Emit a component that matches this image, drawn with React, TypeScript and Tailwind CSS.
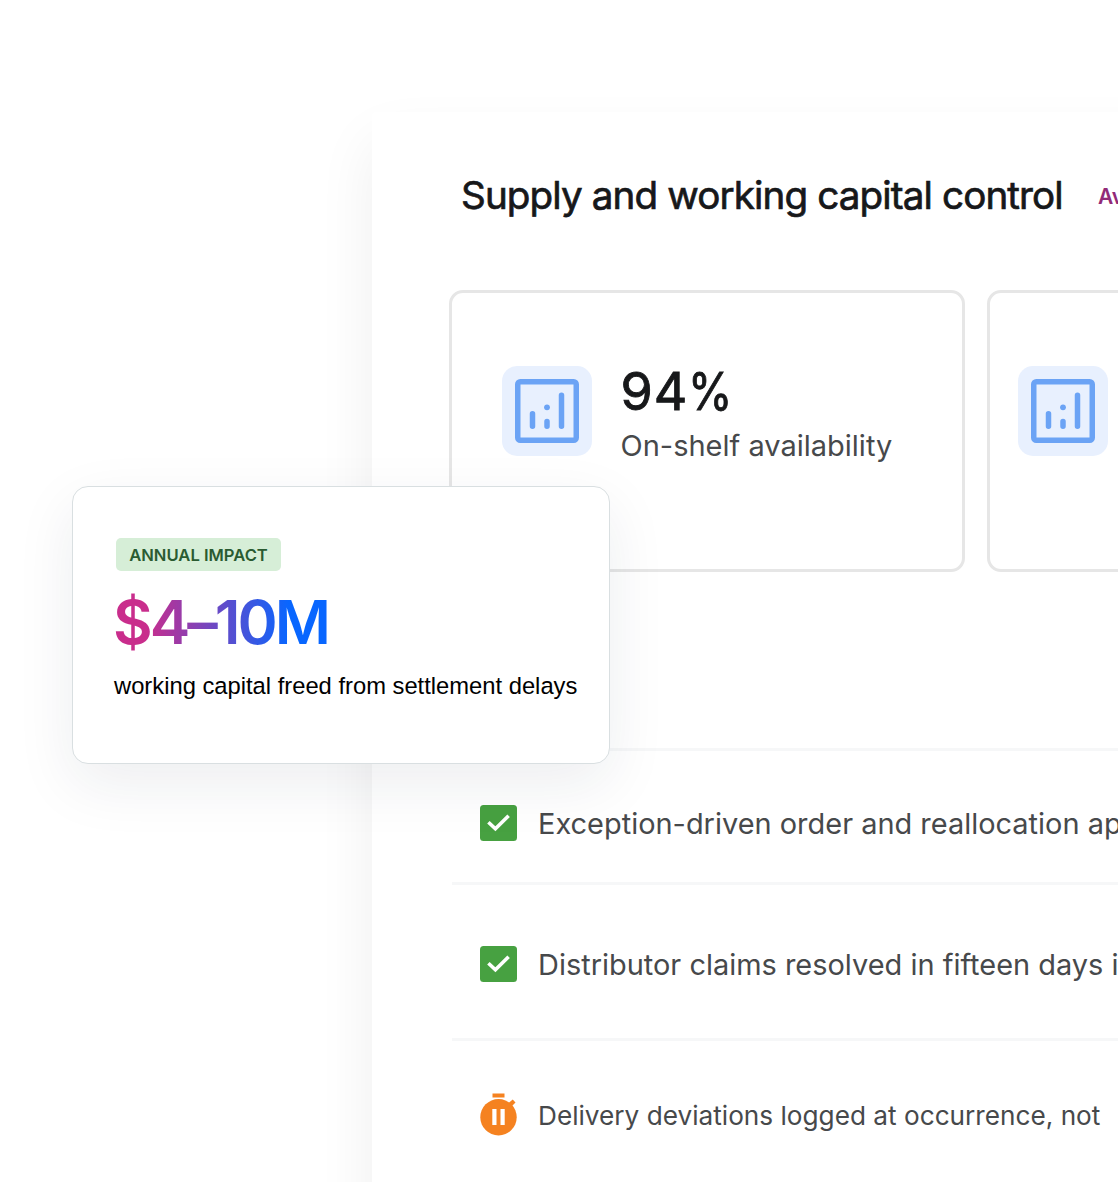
import type { ReactNode } from "react";

function ChartTile() {
  return (
    <div className="flex size-[90px] shrink-0 items-center justify-center rounded-[15px] bg-[#e8f0fe]">
      <svg width="64" height="64" viewBox="0 0 64 64" fill="none" stroke="#6ba3f5" strokeLinecap="round">
        <rect x="2.75" y="2.75" width="58.5" height="58.5" rx="2.5" strokeWidth="5.5" />
        <path d="M17.5 34.8V47.2M32 42.6V47.2M46.5 16.2V47.2" strokeWidth="5.5" />
        <circle cx="32" cy="28.3" r="2.9" fill="#6ba3f5" stroke="none" />
      </svg>
    </div>
  );
}

function CheckIcon() {
  return (
    <svg className="shrink-0" width="37" height="36" viewBox="0 0 37 36" fill="none">
      <rect width="37" height="36" rx="3.5" fill="#47a141" />
      <path d="M8.4 17.2L15.4 23.8L28.6 10.8" stroke="#fff" strokeWidth="3.6" />
    </svg>
  );
}

function TimerIcon() {
  return (
    <svg className="shrink-0" width="37" height="43" viewBox="0 0 37 43">
      <rect x="12.5" y="0.5" width="12" height="4" fill="#f58220" />
      <path d="M27.5 11L32.7 6.5L35.5 9.5L30 15Z" fill="#f58220" />
      <circle cx="18.5" cy="24.2" r="18.2" fill="#f58220" />
      <path d="M12.3 16h4.2v16h-4.2zM20.5 16h4.2v16h-4.2z" fill="#fff" />
    </svg>
  );
}

function TaskRow({ icon, children, className }: { icon: ReactNode; children: ReactNode; className: string }) {
  return (
    <li className={`ml-[80px] flex items-center gap-[21px] border-t-[3px] border-[#f6f7f8] pl-[28px] ${className}`}>
      {icon}
      <span className="mt-[2px] whitespace-nowrap text-[#47494b]">{children}</span>
    </li>
  );
}

export default function App() {
  return (
    <main className="relative flex h-[1182px] w-[1118px] overflow-hidden bg-white pt-[112px] pl-[372px] font-['Inter',sans-serif]">
      <section className="h-[1300px] w-[1100px] shrink-0 rounded-tl-[4px] bg-white shadow-[0_30px_60px_rgba(0,0,0,0.065)]">
        <header className="flex h-[166px] items-center pl-[89px] whitespace-nowrap">
          <h1 className="mt-[1px] w-[637px] text-[38.6px] font-normal tracking-[-0.87px] text-[#17181a] [-webkit-text-stroke:0.7px_#17181a]">
            Supply and working capital control
          </h1>
          <span className="mt-[3px] text-[21px] font-semibold text-[#922a78]">Available</span>
        </header>

        <div className="mt-[12px] ml-[76.5px] flex h-[281.5px] gap-[22px]">
          <article className="flex w-[516.5px] shrink-0 gap-[29px] rounded-[14px] border-[3px] border-[#e6e6e6] pt-[73px] pl-[50px]">
            <ChartTile />
            <div className="whitespace-nowrap">
              <div className="text-[52px] leading-[52px] font-normal tracking-[1px] text-[#17181a] [-webkit-text-stroke:0.9px_#17181a]">
                94<span className="inline-block origin-left scale-x-[0.87]">%</span>
              </div>
              <div className="mt-[10px] text-[29px] leading-[36px] text-[#47494b]">On-shelf availability</div>
            </div>
          </article>
          <article className="w-[516px] shrink-0 rounded-[14px] border-[3px] border-[#e6e6e6] pt-[73px] pl-[28px]">
            <ChartTile />
          </article>
        </div>

        <ul className="mt-[176px] text-[28.95px] leading-[36px]">
          <TaskRow className="h-[134px] pt-[13px]" icon={<CheckIcon />}>
            Exception-driven order and reallocation approvals
          </TaskRow>
          <TaskRow className="h-[156px] pt-[5px]" icon={<CheckIcon />}>
            Distributor claims resolved in fifteen days instead
          </TaskRow>
          <TaskRow className="h-[150px] text-[26.2px] leading-[38px] *:last:mt-[4px]" icon={<TimerIcon />}>
            Delivery deviations logged at occurrence, not
          </TaskRow>
        </ul>
      </section>

      <aside className="absolute top-[486px] left-[72px] h-[278px] w-[538px] rounded-[16px] border border-[#d9dfe1] bg-white pt-[51px] pl-[43px] whitespace-nowrap shadow-[0_20px_60px_rgba(20,40,60,0.08)]">
        <div className="flex h-[33px] w-[165px] items-center justify-center rounded-[5px] bg-[#d6eed7] pt-[1.5px] text-[16.6px] font-semibold text-[#2a5b31]">
          ANNUAL IMPACT
        </div>
        <div className="mt-[16px] -ml-[3px] w-[220px] bg-linear-to-r/srgb from-[#c92d8c] from-15% to-[#0866ff] to-80% bg-clip-text text-[61px] leading-[70px] font-semibold tracking-[-3px] text-transparent">
          $4–10M
        </div>
        <p className="mt-[15px] -ml-[2px] font-['Liberation_Sans',sans-serif] text-[23.75px] leading-[28px] text-black">
          working capital freed from settlement delays
        </p>
      </aside>
    </main>
  );
}
